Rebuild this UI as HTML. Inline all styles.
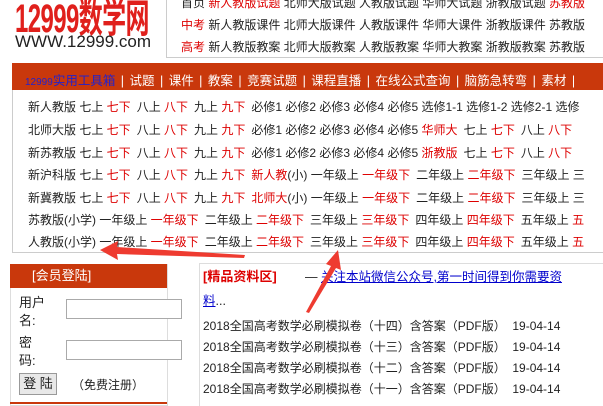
<!DOCTYPE html><html><head><meta charset="utf-8"><style>
body{margin:0;width:603px;height:403px;overflow:hidden;background:#fff;font-family:"Liberation Sans","Noto Sans CJK SC","WenQuanYi Zen Hei",sans-serif;font-size:12px;color:#222;position:relative}
.a{position:absolute;white-space:nowrap}
.r{color:#d00}
.row{position:absolute;left:28px;white-space:nowrap;font-size:12px;word-spacing:0}
.row span{margin-right:6px}
input{border:1px solid #aaa;}
</style></head><body>
<div class="a" style="left:15px;top:-14px;font-size:40px;font-weight:bold;color:#e0201c;transform:scaleX(0.6);transform-origin:0 0;letter-spacing:-1px">12999数学网</div>
<div class="a" style="left:15px;top:32px;font-size:17px;color:#222">WWW.12999.com</div>
<div class="a" style="left:166px;top:-1px;width:440px;height:57px;border:1px solid #ccc;"></div>
<div class="a" style="left:181px;top:-8px;font-size:12px;line-height:22px">首页 <span class="r">新人教版试题</span> 北师大版试题 人教版试题 华师大试题 浙教版试题 <span class="r">苏教版</span><br><span class="r">中考</span> 新人教版课件 北师大版课件 人教版课件 华师大课件 浙教版课件 苏教版<br><span class="r">高考</span> 新人教版教案 北师大版教案 人教版教案 华师大教案 浙教版教案 苏教版</div>
<div class="a" style="left:12px;top:63px;width:600px;height:27px;background:#c9380c"></div>
<div class="a" style="left:25px;top:70px;color:#fff;font-size:12.5px;word-spacing:2px"><span style="color:#22c;font-size:10px">12999</span><span style="color:#22c">实用工具箱</span> | 试题 | 课件 | 教案 | 竞赛试题 | 课程直播 | 在线公式查询 | 脑筋急转弯 | 素材 |</div>
<div class="a" style="left:12px;top:90px;width:600px;height:162px;border:1px solid #ccc;border-top:0"></div>
<div class="row" style="top:98px">新人教版 七上 <span class="r">七下</span>八上 <span class="r">八下</span>九上 <span class="r">九下</span>必修1 必修2 必修3 必修4 必修5 选修1-1 选修1-2 选修2-1 选修</div>
<div class="row" style="top:121px">北师大版 七上 <span class="r">七下</span>八上 <span class="r">八下</span>九上 <span class="r">九下</span>必修1 必修2 必修3 必修4 必修5 <span class="r">华师大</span>七上 <span class="r">七下</span>八上 <span class="r">八下</span></div>
<div class="row" style="top:144px">新苏教版 七上 <span class="r">七下</span>八上 <span class="r">八下</span>九上 <span class="r">九下</span>必修1 必修2 必修3 必修4 必修5 <span class="r">浙教版</span>七上 <span class="r">七下</span>八上 <span class="r">八下</span></div>
<div class="row" style="top:166px">新沪科版 七上 <span class="r">七下</span>八上 <span class="r">八下</span>九上 <span class="r">九下</span><span class="r" style="margin:0">新人教</span>(小) 一年级上 <span class="r">一年级下</span>二年级上 <span class="r">二年级下</span>三年级上 三</div>
<div class="row" style="top:189px">新冀教版 七上 <span class="r">七下</span>八上 <span class="r">八下</span>九上 <span class="r">九下</span><span class="r" style="margin:0">北师大</span>(小) 一年级上 <span class="r">一年级下</span>二年级上 <span class="r">二年级下</span>三年级上 三</div>
<div class="row" style="top:211px">苏教版(小学) 一年级上 <span class="r">一年级下</span>二年级上 <span class="r">二年级下</span>三年级上 <span class="r">三年级下</span>四年级上 <span class="r">四年级下</span>五年级上 <span class="r">五</span></div>
<div class="row" style="top:233px">人教版(小学) 一年级上 <span class="r">一年级下</span>二年级上 <span class="r">二年级下</span>三年级上 <span class="r">三年级下</span>四年级上 <span class="r">四年级下</span>五年级上 <span class="r">五</span></div>
<div class="a" style="left:10px;top:264px;width:156px;height:140px;border:1px solid #ddd"></div>
<div class="a" style="left:10px;top:264px;width:157px;height:24px;background:#c9380c;color:#fff;font-size:13px;line-height:24px;text-indent:22px">[会员登陆]</div>
<div class="a" style="left:19px;top:294px;font-size:13px;line-height:18px">用户<br>名:</div>
<input class="a" style="left:66px;top:299px;width:114px;height:18px;padding:0">
<div class="a" style="left:19px;top:334px;font-size:13px;line-height:18px">密<br>码:</div>
<input class="a" style="left:66px;top:340px;width:114px;height:18px;padding:0">
<div class="a" style="left:19px;top:373px;width:36px;height:20px;border:1px solid #999;background:#e8e8e8;font-size:13px;line-height:20px;text-align:center">登 陆</div>
<div class="a" style="left:72px;top:376px;font-size:12px">（免费注册）</div>
<div class="a" style="left:10px;top:402px;width:157px;height:2px;background:#c9380c"></div>
<div class="a" style="left:199px;top:263px;width:410px;height:142px;border-left:1px solid #ddd;border-top:1px solid #ddd"></div>
<div class="a" style="left:203px;top:266px;font-size:13px;font-weight:bold;color:#d00">[精品资料区]</div>
<div class="a" style="left:305px;top:266px;font-size:12.5px">— <span style="color:#00c;text-decoration:underline">关注本站微信公众号,第一时间得到你需要资</span></div>
<div class="a" style="left:203px;top:290px;font-size:12.5px"><span style="color:#00c;text-decoration:underline">料</span>...</div>
<div class="a" style="left:203px;top:316px;font-size:12px;line-height:21px">2018全国高考数学必刷模拟卷（十四）含答案（PDF版） &nbsp;19-04-14<br>2018全国高考数学必刷模拟卷（十三）含答案（PDF版） &nbsp;19-04-14<br>2018全国高考数学必刷模拟卷（十二）含答案（PDF版） &nbsp;19-04-14<br>2018全国高考数学必刷模拟卷（十一）含答案（PDF版） &nbsp;19-04-14</div>
<svg class="a" style="left:0;top:0" width="603" height="403"><g fill="#ee3b30">
<polygon points="100,250 118,241 117,247 245,255 244,258 117,254 118,260"/>
<polygon points="338,250 341,270 336,268 309,313 306,312 331,266 326,264"/></g></svg>
</body></html>
